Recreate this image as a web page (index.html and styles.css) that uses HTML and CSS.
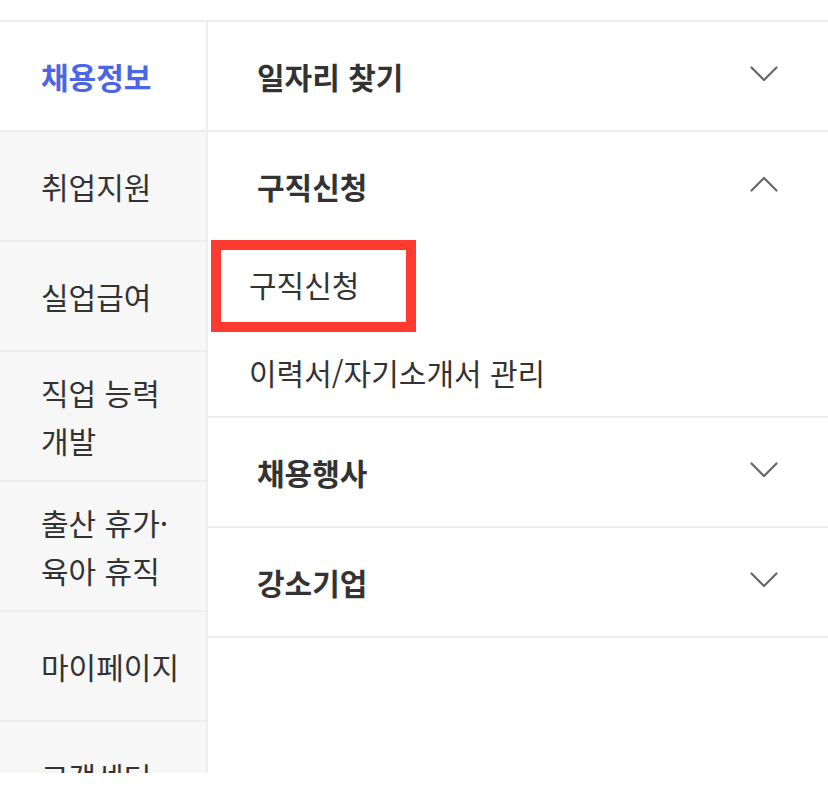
FILE: index.html
```html
<!DOCTYPE html>
<html lang="ko">
<head>
  <meta charset="UTF-8" />
  <meta name="viewport" content="width=device-width, initial-scale=1.0" />
  <title>전체메뉴</title>
  <link rel="stylesheet" href="styles.css">
</head>
<body>
  <div class="page">
    <div class="menu">
      <nav class="side">
        <a class="side-item active">채용정보</a>
        <a class="side-item">취업지원</a>
        <a class="side-item">실업급여</a>
        <a class="side-item">직업 능력 개발</a>
        <a class="side-item">출산 휴가·<wbr>육아 휴직</a>
        <a class="side-item">마이페이지</a>
        <a class="side-item">고객센터</a>
      </nav>
      <div class="panel">
        <section class="group">
          <div class="group-head">
            <span>일자리 찾기</span>
            <svg class="chevron" width="28" height="16" viewBox="0 0 28 16"><polyline points="1.5,1.5 14,14 26.5,1.5" /></svg>
          </div>
        </section>
        <section class="group open">
          <div class="group-head">
            <span>구직신청</span>
            <svg class="chevron" width="28" height="16" viewBox="0 0 28 16"><polyline points="1.5,14.5 14,2 26.5,14.5" /></svg>
          </div>
          <ul class="sub">
            <li class="sub-item marked">구직신청</li>
            <li class="sub-item">이력서/자기소개서 관리</li>
          </ul>
        </section>
        <section class="group">
          <div class="group-head">
            <span>채용행사</span>
            <svg class="chevron" width="28" height="16" viewBox="0 0 28 16"><polyline points="1.5,1.5 14,14 26.5,1.5" /></svg>
          </div>
        </section>
        <section class="group">
          <div class="group-head">
            <span>강소기업</span>
            <svg class="chevron" width="28" height="16" viewBox="0 0 28 16"><polyline points="1.5,1.5 14,14 26.5,1.5" /></svg>
          </div>
        </section>
      </div>
    </div>
  </div>
</body>
</html>
```

FILE: styles.css
```css
body {
  margin: 0;
  background: #fff;
  font-family: "Noto Sans CJK KR", "Noto Sans", sans-serif;
  color: #333;
}

.page {
  padding-top: 20px;
  height: 753px;
  overflow: hidden;
}

.menu {
  display: flex;
  border-top: 2px solid #eee;
}

.side {
  width: 206px;
  flex-shrink: 0;
  background: #f7f7f7;
  border-right: 2px solid #eee;
}

.side-item {
  display: flex;
  align-items: center;
  box-sizing: border-box;
  min-height: 110px;
  padding: 16px 10px 16px 41px;
  border-bottom: 2px solid #eee;
  font-size: 30px;
  line-height: 48px;
  color: #333;
  word-break: keep-all;
}

.side-item.active {
  background: #fff;
  color: #4b65e6;
  font-weight: 700;
}

.panel {
  flex: 1;
}

.group {
  border-bottom: 2px solid #eee;
}

.group-head {
  display: flex;
  align-items: center;
  justify-content: space-between;
  height: 108px;
  padding: 0 50px 0 49px;
  font-size: 30px;
  font-weight: 700;
  color: #333;
}

.chevron {
  margin-bottom: 4px;
}

.chevron polyline {
  fill: none;
  stroke: #666;
  stroke-width: 2.2;
  stroke-linecap: round;
  stroke-linejoin: round;
}

.sub {
  list-style: none;
  margin: 0;
  padding: 0;
}

.sub-item {
  position: relative;
  height: 88px;
  padding-left: 41px;
  font-size: 30px;
  line-height: 88px;
  color: #333;
}

.sub-item.marked::after {
  content: "";
  position: absolute;
  left: 3px;
  top: 0;
  width: 205px;
  height: 92px;
  box-sizing: border-box;
  border: 10px solid #ff3b30;
}
```
